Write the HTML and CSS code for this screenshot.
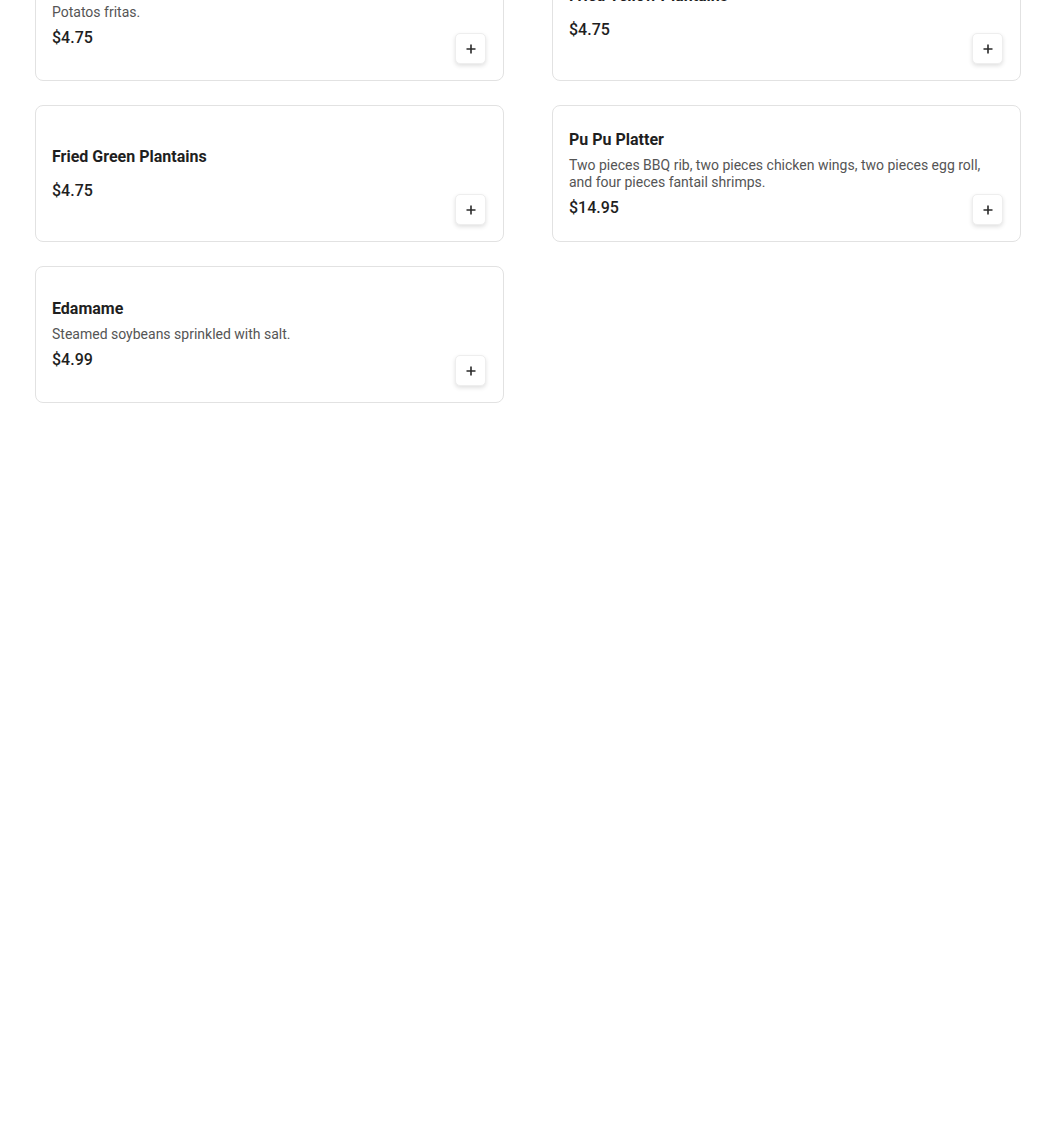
FILE: index.html
```html
<!DOCTYPE html>
<html lang="en">
<head>
  <meta charset="UTF-8">
  <meta name="viewport" content="width=device-width, initial-scale=1.0">
  <title>Menu</title>
  <link rel="stylesheet" href="styles.css">
</head>
<body>
  <div class="menu-lista">

    <div class="item-card">
      <div class="item-info">
        <div class="item-nome">French Fries</div>
        <div class="item-desc">Potatos fritas.</div>
        <div class="item-preco">$4.75</div>
      </div>
      <button class="btn-add" aria-label="Adicionar">
        <svg viewBox="0 0 12 12" width="12" height="12"><path d="M6 1.5v9M1.5 6h9" stroke="currentColor" stroke-width="1.6" fill="none"/></svg>
      </button>
    </div>

    <div class="item-card">
      <div class="item-info">
        <div class="item-nome">Fried Yellow Plantains</div>
        <div class="item-desc"></div>
        <div class="item-preco">$4.75</div>
      </div>
      <button class="btn-add" aria-label="Adicionar">
        <svg viewBox="0 0 12 12" width="12" height="12"><path d="M6 1.5v9M1.5 6h9" stroke="currentColor" stroke-width="1.6" fill="none"/></svg>
      </button>
    </div>

    <div class="item-card">
      <div class="item-info">
        <div class="item-nome">Fried Green Plantains</div>
        <div class="item-desc"></div>
        <div class="item-preco">$4.75</div>
      </div>
      <button class="btn-add" aria-label="Adicionar">
        <svg viewBox="0 0 12 12" width="12" height="12"><path d="M6 1.5v9M1.5 6h9" stroke="currentColor" stroke-width="1.6" fill="none"/></svg>
      </button>
    </div>

    <div class="item-card">
      <div class="item-info">
        <div class="item-nome">Pu Pu Platter</div>
        <div class="item-desc">Two pieces BBQ rib, two pieces chicken wings, two pieces egg roll, and four pieces fantail shrimps.</div>
        <div class="item-preco">$14.95</div>
      </div>
      <button class="btn-add" aria-label="Adicionar">
        <svg viewBox="0 0 12 12" width="12" height="12"><path d="M6 1.5v9M1.5 6h9" stroke="currentColor" stroke-width="1.6" fill="none"/></svg>
      </button>
    </div>

    <div class="item-card">
      <div class="item-info">
        <div class="item-nome">Edamame</div>
        <div class="item-desc">Steamed soybeans sprinkled with salt.</div>
        <div class="item-preco">$4.99</div>
      </div>
      <button class="btn-add" aria-label="Adicionar">
        <svg viewBox="0 0 12 12" width="12" height="12"><path d="M6 1.5v9M1.5 6h9" stroke="currentColor" stroke-width="1.6" fill="none"/></svg>
      </button>
    </div>

  </div>
</body>
</html>
```

FILE: styles.css
```css
:root {
  --texto: #1f1f1f;
  --texto-suave: #555555;
  --borda: #e2e2e2;
  --branco: #ffffff;
}

body {
  margin: 0;
  font-family: Roboto, 'Liberation Sans', sans-serif;
  background-color: var(--branco);
  color: var(--texto);
}

/* lista rolada: a primeira linha fica cortada no topo */
.menu-lista {
  display: grid;
  grid-template-columns: 1fr 1fr;
  column-gap: 48px;
  row-gap: 24px;
  margin: -56px 29px 0 35px;
}

.item-card {
  position: relative;
  display: flex;
  height: 137px;
  box-sizing: border-box;
  padding: 16px;
  border: 1px solid var(--borda);
  border-radius: 8px;
  background-color: var(--branco);
}

.item-info {
  flex: 1;
  display: flex;
  flex-direction: column;
  justify-content: center;
  gap: 7px;
  padding-right: 20px;
}

.item-nome {
  font-size: 16px;
  font-weight: 700;
  line-height: 20px;
}

.item-desc {
  font-size: 14px;
  line-height: 17px;
  color: var(--texto-suave);
}

.item-preco {
  font-size: 16px;
  font-weight: 500;
  line-height: 20px;
}

/* botão fica sobre o canto inferior direito do card */
.btn-add {
  position: absolute;
  right: 17px;
  bottom: 16px;
  width: 31px;
  height: 31px;
  padding: 0;
  display: flex;
  align-items: center;
  justify-content: center;
  border: 1px solid #eeeeee;
  border-radius: 5px;
  background-color: var(--branco);
  color: #2a2a2a;
  box-shadow: 0 2px 4px rgba(0,0,0,0.12);
  cursor: pointer;
}
```
